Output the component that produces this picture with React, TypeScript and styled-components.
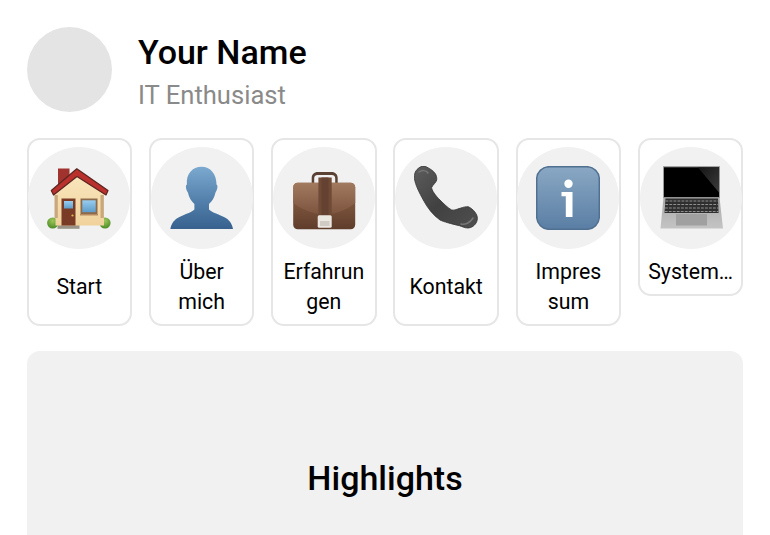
import React from 'react';
import styled, { createGlobalStyle } from 'styled-components';

const GlobalStyle = createGlobalStyle`
  html, body {
    margin: 0;
    padding: 0;
    background: #fff;
    overflow: hidden;
  }
  body {
    font-family: Roboto, "Liberation Sans", sans-serif;
    color: #000;
  }
`;

const Page = styled.div`
  width: 770px;
  height: 535px;
  overflow: hidden;
  box-sizing: border-box;
  padding: 26.67px 26.67px 0;
`;

const Profile = styled.header`
  display: flex;
  align-items: flex-start;
  gap: 26px;
`;

const Avatar = styled.div`
  width: 85.33px;
  height: 85.33px;
  border-radius: 50%;
  background: #e4e4e4;
`;

const ProfileText = styled.div`
  display: flex;
  flex-direction: column;
  gap: 9px;
  padding-top: 6px;
`;

const Name = styled.div`
  font-size: 34px;
  line-height: 38px;
  font-weight: 500;
`;

const Role = styled.div`
  font-size: 25.6px;
  line-height: 30px;
  color: #8a8a8a;
`;

const Nav = styled.nav`
  display: grid;
  grid-template-columns: repeat(6, 1fr);
  gap: 16.8px;
  margin-top: 26px;
`;

const Card = styled.div<{ $short?: boolean }>`
  display: flex;
  flex-direction: column;
  align-items: center;
  box-sizing: border-box;
  min-width: 0;
  padding-top: 7px;
  border: 2px solid #e6e6e6;
  border-radius: 13px;
  align-self: ${props => (props.$short ? 'start' : 'stretch')};
`;

const Circle = styled.div`
  display: flex;
  align-items: center;
  justify-content: center;
  width: 102px;
  height: 102px;
  flex: none;
  border-radius: 50%;
  background: #f1f1f1;
`;

const Emoji = styled.svg`
  width: 64px;
  height: 64px;
  filter: blur(0.35px);
`;

const Label = styled.div`
  flex: 1;
  display: flex;
  align-items: center;
  justify-content: center;
  box-sizing: border-box;
  width: 100%;
  padding: 8px 4px 7px;
  font-size: 21.3px;
  line-height: 30px;
  text-align: center;
`;

const Highlights = styled.section`
  display: flex;
  justify-content: center;
  margin-top: 25px;
  height: 260px;
  padding-top: 107px;
  box-sizing: border-box;
  border-radius: 13px;
  background: #f1f1f1;
`;

const HighlightsTitle = styled.h2`
  margin: 0;
  font-size: 34px;
  line-height: 40px;
  font-weight: 500;
`;

const HouseIcon = () => (
  <Emoji viewBox="0 0 64 64">
    <defs>
      <linearGradient id="wall" x1="0" y1="0" x2="0" y2="1">
        <stop offset="0" stopColor="#f9e6bd" />
        <stop offset="1" stopColor="#f0d29c" />
      </linearGradient>
      <linearGradient id="glass" x1="0" y1="0" x2="0" y2="1">
        <stop offset="0" stopColor="#97cdf0" />
        <stop offset="1" stopColor="#5f9cc9" />
      </linearGradient>
      <radialGradient id="bush" cx="0.5" cy="0.3" r="0.7">
        <stop offset="0" stopColor="#9cc65a" />
        <stop offset="1" stopColor="#4c8a26" />
      </radialGradient>
    </defs>
    <rect x="11" y="2.500" width="11.500" height="18" fill="#a1332e" />
    <rect x="10.500" y="59" width="22" height="3.800" fill="#9a9488" />
    <circle cx="5.700" cy="57" r="5.600" fill="url(#bush)" />
    <circle cx="58" cy="57" r="5.600" fill="url(#bush)" />
    <path d="M8.500 27 30 9l27 18v32.500H8.500z" fill="url(#wall)" />
    <path d="M7.500 29h3.300v23H7.500zM53.500 29h3.300v23h-3.300z" fill="#c9a77c" />
    <path d="M4.300 24.500 29.800 2.800 61 24.500 59 29 30 10.500 6.500 29z" fill="#b9302c" stroke="#5a2420" strokeWidth="1.200" strokeLinejoin="round" />
    <rect x="14.500" y="32.500" width="14" height="27" fill="#7a3b26" />
    <rect x="17" y="35" width="9" height="7.500" fill="url(#glass)" />
    <circle cx="25.500" cy="49.500" r="1.100" fill="#e6b84c" />
    <rect x="33.500" y="32.500" width="17" height="15.500" fill="#8d6a4b" />
    <rect x="35.300" y="34.300" width="13.400" height="11.900" fill="url(#glass)" />
    <rect x="33" y="48" width="18" height="1.500" fill="#b8895e" />
  </Emoji>
);

const PersonIcon = () => (
  <Emoji viewBox="0 0 64 64">
    <defs>
      <linearGradient id="bust" x1="0" y1="0" x2="0" y2="1">
        <stop offset="0" stopColor="#7ca9cf" />
        <stop offset="0.6" stopColor="#4f7ca8" />
        <stop offset="1" stopColor="#38618e" />
      </linearGradient>
    </defs>
    <path
      d="M31.500.7C40.500.7 46.500 8 46.500 18.500c1.600.6 1.200 5-1 8-1 5-3.500 9-6.500 11.500v5.500c3 3 9 4.500 15 7.500 5 2.400 8.200 6.500 9 12H.4c.8-5.500 4-9.600 9-12 6-3 12-4.500 15-7.500V38c-3-2.500-5.500-6.500-6.500-11.500-2.200-3-2.600-7.400-1-8C15.900 8 22.500.7 31.500.7z"
      fill="url(#bust)"
    />
  </Emoji>
);

const BriefcaseIcon = () => (
  <Emoji viewBox="0 0 64 64">
    <defs>
      <linearGradient id="leather" x1="0" y1="0" x2="0" y2="1">
        <stop offset="0" stopColor="#946b50" />
        <stop offset="0.5" stopColor="#7a523b" />
        <stop offset="1" stopColor="#5f3d2b" />
      </linearGradient>
      <linearGradient id="flap" x1="0" y1="0" x2="0" y2="1">
        <stop offset="0" stopColor="#a27a5f" />
        <stop offset="1" stopColor="#7d5540" />
      </linearGradient>
    </defs>
    <path d="M19.700 17v-5c0-3.500 2.500-6 6-6h14c3.500 0 6 2.500 6 6v5h-2.500v-4.500c0-2-1-3.500-3.500-3.500H25.700c-2.500 0-3.500 1.500-3.500 3.500V17z" fill="#5a4134" />
    <rect x="1.200" y="16.700" width="62" height="46.500" rx="4.500" fill="url(#leather)" />
    <path d="M1.200 21c0-2.500 2-4.300 4.500-4.300h53c2.500 0 4.500 1.800 4.500 4.300v16c-7 6-15 9-24 11H26c-9-2-17-5-24.800-11z" fill="url(#flap)" />
    <rect x="26.400" y="11.500" width="13.300" height="38" fill="#6f4a36" />
    <rect x="29.500" y="11.500" width="7" height="38" fill="#644130" />
    <rect x="25.700" y="49.300" width="14" height="12.500" rx="1.500" fill="#ebe8e2" />
    <rect x="28" y="55" width="9.500" height="5" fill="#d0ccc5" />
  </Emoji>
);

const PhoneIcon = () => (
  <Emoji viewBox="0 0 64 64">
    <defs>
      <linearGradient id="handset" x1="0" y1="0" x2="1" y2="1">
        <stop offset="0" stopColor="#5e5e5e" />
        <stop offset="0.5" stopColor="#414141" />
        <stop offset="1" stopColor="#4f4f4f" />
      </linearGradient>
    </defs>
    <path
      d="M.4 12.300C.2 8.500 1 5.500 3 3.500 5.500 1 8.500-.5 11 .2c4 2 8.500 4.500 10 7.100 1.500 2 2 4.700 1.700 6.700-.6 2.500-3.500 4.500-5 7.300-.3 2.700 4 8.700 8.300 12.700 4 4 8 8 11.700 10 3 .6 5.500-1 8.300-1.700 3-1 6-1.900 8.300-1.600 3.500 1.500 7 5 8.400 8.300 1 2.500.8 4.500 0 6.700-1.500 3.500-5 6.300-9 6.300-3 0-5.500-1.500-8.300-2.300C36 57.500 30.500 56 26 54c-7-5-12.500-12-16.700-20C5.500 27 1.200 19 .4 12.300z"
      fill="url(#handset)"
      stroke="#333"
      strokeWidth="0.800"
    />
    <path d="M5 6c3-2 7-2 9 1M47 58c4 1 9-1 12-6" fill="none" stroke="#777" strokeWidth="1.500" strokeLinecap="round" />
  </Emoji>
);

const InfoIcon = () => (
  <Emoji viewBox="0 0 64 64">
    <defs>
      <linearGradient id="tile" x1="0" y1="0" x2="0" y2="1">
        <stop offset="0" stopColor="#8aa8c4" />
        <stop offset="1" stopColor="#5a7ea4" />
      </linearGradient>
    </defs>
    <rect x="0.700" y="0.700" width="62.600" height="62.600" rx="12.500" fill="url(#tile)" stroke="#4f7090" strokeWidth="1.500" />
    <circle cx="32.500" cy="17.700" r="4.200" fill="#fff" />
    <path d="M25.500 26h11v25h-6.700V30.300h-4.300z" fill="#fff" />
  </Emoji>
);

const LaptopIcon = () => (
  <Emoji viewBox="0 0 64 64">
    <defs>
      <linearGradient id="deck" x1="0" y1="0" x2="0" y2="1">
        <stop offset="0" stopColor="#a8a8a8" />
        <stop offset="1" stopColor="#c4c4c4" />
      </linearGradient>
      <linearGradient id="glare" x1="0" y1="0" x2="1" y2="1">
        <stop offset="0" stopColor="#151515" />
        <stop offset="1" stopColor="#3c3c3c" />
      </linearGradient>
    </defs>
    <rect x="4.500" y="0.800" width="56" height="31" fill="#000" stroke="#9a9a9a" strokeWidth="1" />
    <path d="M39 1.500h21v25z" fill="url(#glare)" />
    <path d="M4.500 31.500h56L64 62.500H1.500z" fill="url(#deck)" />
    <path d="M6.500 32.500h52.500l.6 14.500H5.500z" fill="#2f2f2f" />
    <path d="M6.500 35h52.500M6.300 38.500h53M6 42h53.500M5.800 45.500h53.700" stroke="#8f8f8f" strokeWidth="1" strokeDasharray="2.800 1.200" />
    <rect x="17" y="48" width="31" height="11.500" fill="#a0a0a0" />
  </Emoji>
);

const items = [
  { label: 'Start', icon: <HouseIcon /> },
  { label: 'Über mich', icon: <PersonIcon /> },
  { label: 'Erfahrun gen', icon: <BriefcaseIcon /> },
  { label: 'Kontakt', icon: <PhoneIcon /> },
  { label: 'Impres sum', icon: <InfoIcon /> },
  { label: 'System…', icon: <LaptopIcon />, short: true },
];

const App = () => {
  return (
    <Page>
      <GlobalStyle />
      <Profile>
        <Avatar />
        <ProfileText>
          <Name>Your Name</Name>
          <Role>IT Enthusiast</Role>
        </ProfileText>
      </Profile>
      <Nav>
        {items.map(item => (
          <Card key={item.label} $short={item.short}>
            <Circle>{item.icon}</Circle>
            <Label>{item.label}</Label>
          </Card>
        ))}
      </Nav>
      <Highlights>
        <HighlightsTitle>Highlights</HighlightsTitle>
      </Highlights>
    </Page>
  );
};

export default App;
